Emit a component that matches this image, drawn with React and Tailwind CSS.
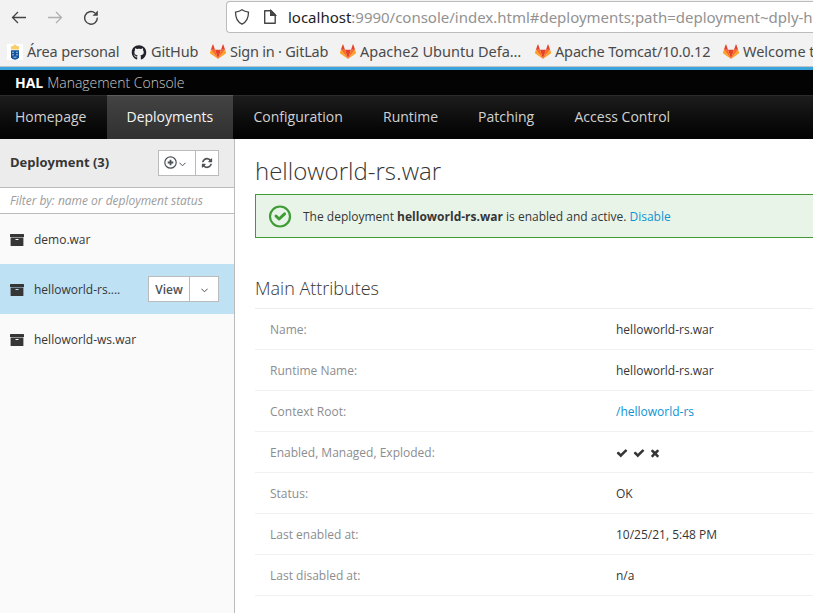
import React from "react";
import { FaGithub } from "react-icons/fa";

function GitLabIcon() {
  return (
    <svg className="h-4 w-4 shrink-0" viewBox="0 0 16 16">
      <path d="M8 15 5 5.8h6z" fill="#e24329" />
      <path d="M8 15 5 5.8H.9zM8 15l3-9.2h4.1z" fill="#fc6d26" />
      <path d="M.9 5.8 0 8.6c-.1.3 0 .6.3.8L8 15zM15.1 5.8l.9 2.8c.1.3 0 .6-.3.8L8 15z" fill="#fca326" />
      <path d="M.9 5.8H5L3.2.6q-.2-.4-.5 0zM15.1 5.8H11l1.8-5.2q.2-.4.5 0z" fill="#e24329" />
    </svg>
  );
}

function CrestIcon() {
  return (
    <span className="flex h-4 w-4 shrink-0 bg-white">
      <svg className="h-4 w-4" viewBox="0 0 16 16">
        <path d="M4.2 5.500 3.800 2.500 6 2l2-1.800L10 2l2.200.5-.4 3z" fill="#f6cf6b" />
        <path d="M4 6.200h8v7.300Q11 15.500 8 15.800 5 15.500 4 13.500z" fill="#15539c" />
        <path d="M5 8.300h2M9 8.300h2M5 10.800h2M9 10.800h2M6.500 13.200h3" stroke="#b8cde4" strokeWidth=".9" />
      </svg>
    </span>
  );
}

function Archive() {
  return (
    <svg className="h-3 w-[14px] shrink-0" viewBox="0 0 14 12" fill="#363636">
      <path d="M.5 0h13q.5 0 .5.5V3H0V.5Q0 0 .5 0z" />
      <path fillRule="evenodd" d="M.6 3.600h12.800v7.900q0 .5-.5.5H1.100q-.5 0-.5-.5zM5.500 5v1h3V5z" />
    </svg>
  );
}

function Glyph({ d, className }) {
  return (
    <svg className={className} viewBox="0 0 1792 1792" fill="currentColor">
      <path d={d} />
    </svg>
  );
}

const CHECK =
  "M1671 566q0 40-28 68l-724 724-136 136q-28 28-68 28t-68-28l-136-136-362-362q-28-28-28-68t28-68l136-136q28-28 68-28t68 28l294 295 656-657q28-28 68-28t68 28l136 136q28 28 28 68z";
const TIMES =
  "M1490 1322q0 40-28 68l-136 136q-28 28-68 28t-68-28l-294-294-294 294q-28 28-68 28t-68-28l-136-136q-28-28-28-68t28-68l294-294-294-294q-28-28-28-68t28-68l136-136q28-28 68-28t68 28l294 294 294-294q28-28 68-28t68 28l136 136q28 28 28 68t-28 68l-294 294 294 294q28 28 28 68z";
const REFRESH =
  "M1639 1056q0 5-1 7-64 268-268 434.5t-478 166.5q-146 0-282.5-55t-243.5-157l-129 129q-19 19-45 19t-45-19-19-45v-448q0-26 19-45t45-19h448q26 0 45 19t19 45-19 45l-137 137q71 66 161 102t187 36q134 0 250-65t186-179q11-17 53-117 8-23 30-23h192q13 0 22.5 9.5t9.5 22.5zm25-800v448q0 26-19 45t-45 19h-448q-26 0-45-19t-19-45 19-45l138-138q-148-137-349-137-134 0-250 65t-186 179q-11 17-53 117-8 23-30 23h-199q-13 0-22.5-9.5t-9.5-22.5v-7q65-268 270-434.5t480-166.5q146 0 284 55.5t245 156.5l130-129q19-19 45-19t45 19 19 45z";

function Chevron() {
  return (
    <svg className="h-[5px] w-[7px]" viewBox="0 0 7 5" fill="none" stroke="#4d5258">
      <path d="M.4.7 3.500 3.800 6.600.7" />
    </svg>
  );
}

function Bookmark({ icon, width, children }) {
  return (
    <div className={`flex shrink-0 items-center gap-1 ${width}`}>
      {icon}
      <span>{children}</span>
    </div>
  );
}

function Browser() {
  return (
    <div className="h-[67px] border-b border-[#c4c4c4] bg-[#f2f2f2] font-['Noto_Sans',sans-serif] text-[#4a4a4a]">
      <div className="flex h-[35px] items-start pt-px">
        <div className="flex h-8 w-[226px] items-center pl-[11px]">
          <svg className="h-4 w-4" viewBox="0 0 16 16" fill="none" stroke="#444" strokeWidth="1.3">
            <path d="M15 8.500H1.500M7 3 1.500 8.500 7 14" />
          </svg>
          <svg className="ml-5 h-4 w-4" viewBox="0 0 16 16" fill="none" stroke="#b0b0b0" strokeWidth="1.3">
            <path d="M1 8.500h13.500M9 3l5.500 5.500L9 14" />
          </svg>
          <svg className="ml-5 h-4 w-4" viewBox="0 0 16 16" fill="none" stroke="#444" strokeWidth="1.4">
            <path d="M14.300 8.600A6.300 6.300 0 1 1 12 4" />
            <path d="M14.800 1.500v5.300H9.500z" fill="#444" stroke="none" />
          </svg>
        </div>
        <div className="flex h-8 flex-1 items-center overflow-hidden rounded-l border border-r-0 border-[#bcbcbc] bg-white pl-[7px]">
          <svg className="h-4 w-4 shrink-0" viewBox="0 0 16 16" fill="none" stroke="#444" strokeWidth="1.3">
            <path d="M8 .8q2.500 1.800 6.500 2.400c0 6-2 9.800-6.500 12C3.500 13 1.500 9.200 1.500 3.200 5.500 2.600 8 .8 8 .8z" />
          </svg>
          <svg className="ml-3 h-4 w-4 shrink-0" viewBox="0 0 16 16" fill="none" stroke="#444" strokeWidth="1.4">
            <path d="M2.700 1.700h6.500l4 4v8.600H2.700z" strokeLinejoin="round" />
            <path d="M8.700 1.500v4.700h4.700z" fill="#444" />
          </svg>
          <span className="ml-[10px] whitespace-nowrap text-[15px] tracking-[-0.01px] text-[#929292]">
            <span className="text-[#222]">localhost</span>:9990/console/index.html#deployments;path=deployment~dply-h
          </span>
        </div>
      </div>
      <div className="flex h-[31px] items-center overflow-hidden whitespace-nowrap pl-[7px] pt-[3px] text-[14.5px]">
        <Bookmark width="w-[124px] tracking-[-0.18px]" icon={<CrestIcon />}>Área personal</Bookmark>
        <Bookmark width="w-[79px] tracking-[-0.15px]" icon={<FaGithub className="h-[15px] w-4 shrink-0 text-[#24212b]" />}>GitHub</Bookmark>
        <Bookmark width="w-[130px] tracking-[-0.22px]" icon={<GitLabIcon />}>Sign in · GitLab</Bookmark>
        <Bookmark width="w-[195px]" icon={<GitLabIcon />}>Apache2 Ubuntu Defa…</Bookmark>
        <Bookmark width="w-[188px] tracking-[-0.15px]" icon={<GitLabIcon />}>Apache Tomcat/10.0.12</Bookmark>
        <Bookmark width="w-[150px]" icon={<GitLabIcon />}>Welcome t</Bookmark>
      </div>
    </div>
  );
}

function Header() {
  return (
    <header className="border-t-[3px] border-[#39a5dc] bg-[#030303]">
      <div className="flex h-[25px] items-center pl-[15px] text-[14px] font-light tracking-[-0.02px] text-[#c8c8c8]">
        <b className="mr-1 font-bold text-white">HAL</b>
        <span>Management Console</span>
      </div>
      <nav className="flex h-11 border-t border-[#2b2b2b] bg-linear-to-b from-[#1d1d1d] to-[#030303] text-[14px] leading-[42px] text-[#d1d1d1]">
        <span className="w-[107px] pl-[15px]">Homepage</span>
        <span className="-mt-px w-[126px] border-t border-[#5c5c5c] bg-linear-to-b from-[#434343] to-[#303030] pl-[19.5px] text-[#f5f5f5]">
          Deployments
        </span>
        <span className="w-[130px] pl-[20.5px]">Configuration</span>
        <span className="w-[95px] pl-5">Runtime</span>
        <span className="w-24 pl-5">Patching</span>
        <span className="pl-[20.5px]">Access Control</span>
      </nav>
    </header>
  );
}

function Item({ name, active }) {
  return (
    <li className={`flex h-[50px] items-center pl-[10px] ${active ? "bg-[#bee1f4]" : ""}`}>
      <span className="pt-[2px]"><Archive /></span>
      <span className="ml-[10px] flex-1 pt-[2px]">{name}</span>
      {active && (
        <div className="mr-[15px] flex h-[26px] border border-[#bbb] bg-white">
          <span className="flex w-[41px] items-center justify-center border-r border-[#bbb] pt-px text-[12px] font-semibold text-[#4d5258]">
            View
          </span>
          <span className="flex w-7 items-center justify-center pt-[2px]">
            <Chevron />
          </span>
        </div>
      )}
    </li>
  );
}

function Sidebar() {
  return (
    <aside className="w-[235px] shrink-0 border-r border-[#bbb] bg-[#fafafa]">
      <div className="flex h-[49px] items-center border-b border-[#bbb] bg-[#ececec] pl-[10px]">
        <b className="flex-1 text-[13px]">Deployment (3)</b>
        <div className="mr-[15px] flex h-[26px] border border-[#bbb] bg-white text-[#4d5258]">
          <span className="flex w-[37px] items-center gap-[2px] border-r border-[#bbb] pl-[5px]">
            <svg className="-mt-px h-[13px] w-[13px]" viewBox="0 0 13 13" fill="none" stroke="currentColor">
              <circle cx="6.5" cy="6.5" r="5.7" strokeWidth="1.2" />
              <path d="M6.500 3.700v5.600M3.700 6.500h5.600" strokeWidth="1.8" />
            </svg>
            <span className="flex pt-[3px]"><Chevron /></span>
          </span>
          <span className="flex w-[22px] items-center justify-center">
            <Glyph d={REFRESH} className="h-3 w-3" />
          </span>
        </div>
      </div>
      <div className="h-[26px] border-b border-[#bbb] bg-white pl-[10px] leading-[25px] italic tracking-[-0.02px] text-[#9c9c9c]">
        Filter by: name or deployment status
      </div>
      <ul>
        <Item name="demo.war" />
        <Item name="helloworld-rs...." active />
        <Item name="helloworld-ws.war" />
      </ul>
    </aside>
  );
}

function Row({ label, children }) {
  return (
    <div className="flex h-[41px] items-center border-b border-[#f1f1f1] pl-[15px] pt-[2px]">
      <span className="w-[346px] text-[#8b8d8f]">{label}</span>
      <span>{children}</span>
    </div>
  );
}

function Content() {
  return (
    <main className="min-w-0 flex-1 overflow-hidden pl-5">
      <h1 className="mt-[18px] h-[37px] text-[24px] font-light leading-[28px]">helloworld-rs.war</h1>
      <div className="flex h-11 items-center border border-r-0 border-[#3f9c35] bg-[#e9f4e9] pl-[13px]">
        <svg className="h-[23px] w-[23px]" viewBox="0 0 23 23" fill="none" stroke="#3f9c35">
          <circle cx="11" cy="11.5" r="10" strokeWidth="2.2" />
          <path d="m7 11 3.100 3 5.500-5.100" strokeWidth="3" strokeLinecap="round" strokeLinejoin="round" />
        </svg>
        <p className="ml-[11px] pt-[2px]">
          The deployment <b>helloworld-rs.war</b> is enabled and active.{" "}
          <a className="text-[#0f93d2]">Disable</a>
        </p>
      </div>
      <h2 className="mt-[38px] h-[33px] border-b border-[#ededed] text-[18px] font-light leading-[25px]">
        Main Attributes
      </h2>
      <Row label="Name:">helloworld-rs.war</Row>
      <Row label="Runtime Name:">helloworld-rs.war</Row>
      <Row label="Context Root:"><a className="text-[#0f93d2]">/helloworld-rs</a></Row>
      <Row label="Enabled, Managed, Exploded:">
        <span className="flex gap-[5px]">
          <Glyph d={CHECK} className="h-3 w-3" />
          <Glyph d={CHECK} className="h-3 w-3" />
          <Glyph d={TIMES} className="-ml-px h-3 w-3" />
        </span>
      </Row>
      <Row label="Status:">OK</Row>
      <Row label="Last enabled at:">10/25/21, 5:48 PM</Row>
      <Row label="Last disabled at:">n/a</Row>
    </main>
  );
}

export default function App() {
  return (
    <div className="flex h-[613px] w-[813px] flex-col overflow-hidden bg-white font-['Open_Sans',sans-serif] text-[12px] text-[#363636]">
      <Browser />
      <Header />
      <div className="flex flex-1">
        <Sidebar />
        <Content />
      </div>
    </div>
  );
}
